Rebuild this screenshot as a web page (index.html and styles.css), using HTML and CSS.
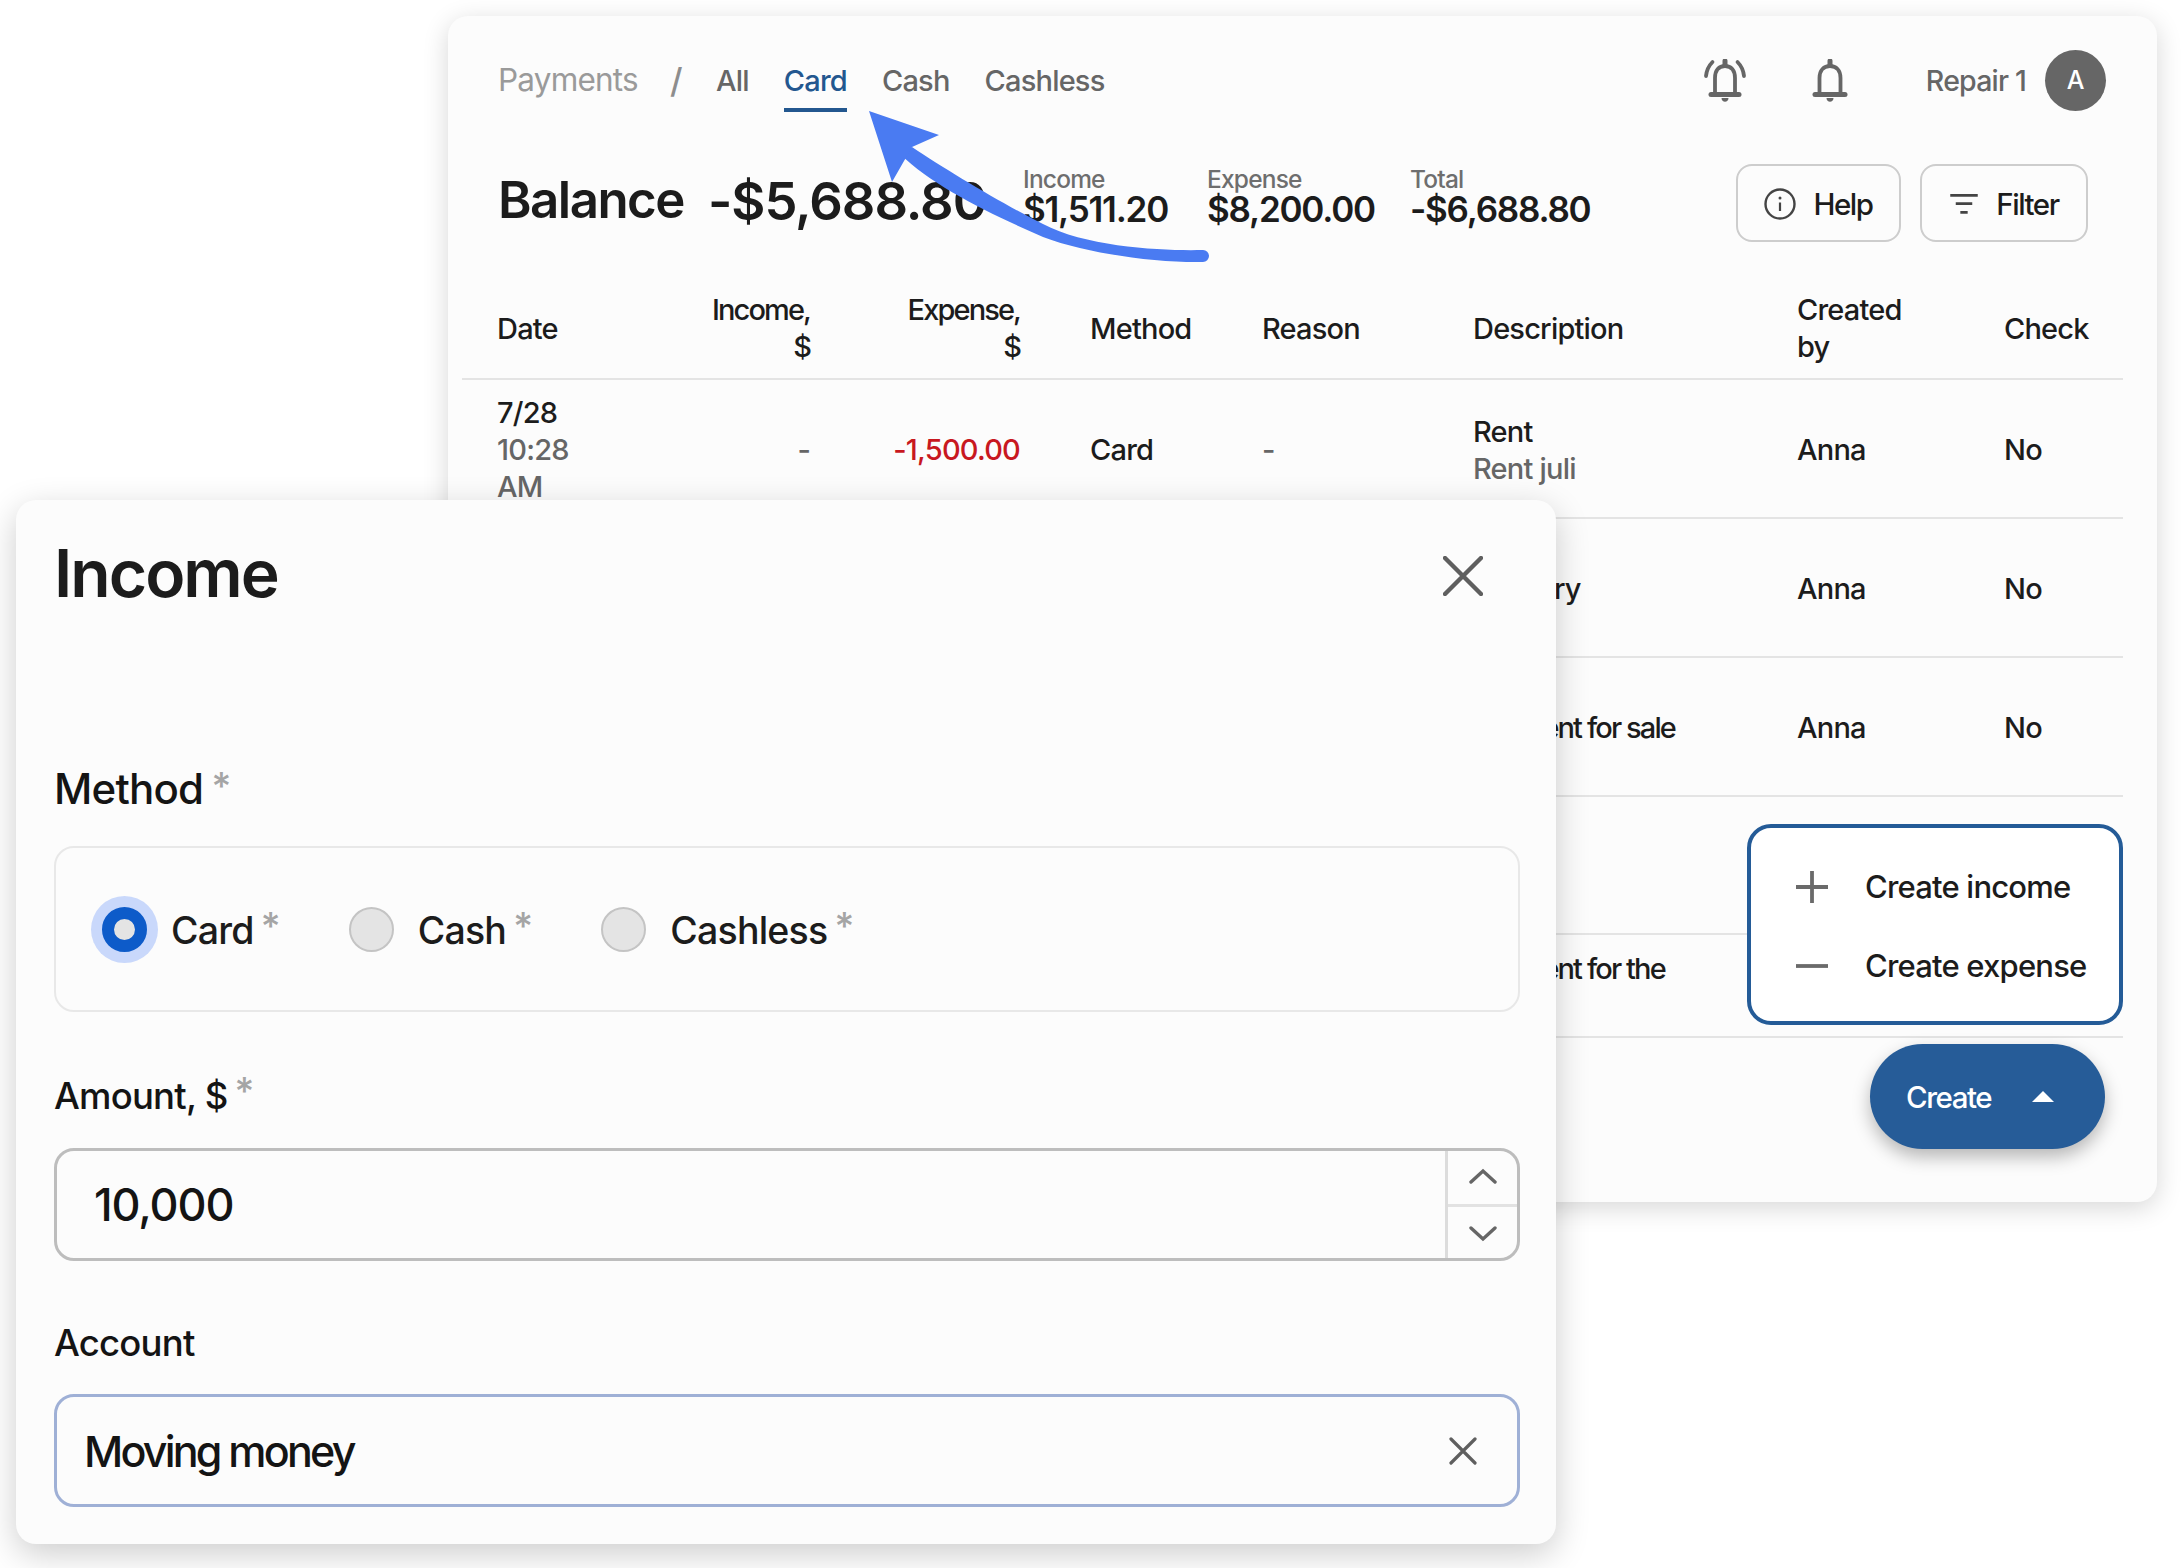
FILE: index.html
```html
<!DOCTYPE html>
<html lang="en">
<head>
<meta charset="utf-8">
<title>Payments</title>
<link rel="stylesheet" href="styles.css">
</head>
<body>
<div class="canvas">
  <section class="window back">
    <header class="topbar">
      <nav class="crumbs">
        <span class="crumb-root">Payments</span>
        <span class="crumb-sep">/</span>
        <a class="tab">All</a>
        <a class="tab active">Card</a>
        <a class="tab">Cash</a>
        <a class="tab">Cashless</a>
      </nav>
      <div class="account-area">
        <svg class="bell-ring" viewBox="0 0 44 44" fill="none" stroke="#666" stroke-linecap="round">
          <path d="M12 33V19C12 11 16 7 22 7S32 11 32 19V33" stroke-width="3.8"/>
          <path d="M8 35.500H36" stroke-width="5"/>
          <path d="M22 2V6" stroke-width="5"/>
          <path d="M9.500 3C5.500 7 3.500 12 3 17M34.500 3C38.500 7 40.500 12 41 17" stroke-width="3.800"/>
          <path d="M18.500 39H25.500C25.500 44 18.500 44 18.500 39Z" fill="#666" stroke="none"/>
        </svg>
        <svg class="bell" viewBox="0 0 36 44" fill="none" stroke="#666" stroke-linecap="round">
          <path d="M7.500 33V19C7.500 11 12 7 18 7S28.500 11 28.500 19V33" stroke-width="3.800"/>
          <path d="M3 35.500H33" stroke-width="5"/>
          <path d="M18 2V6" stroke-width="5"/>
          <path d="M14.500 39H21.500C21.500 44 14.500 44 14.500 39Z" fill="#666" stroke="none"/>
        </svg>
        <span class="account-name">Repair 1</span>
        <span class="avatar">A</span>
      </div>
    </header>

    <div class="summary">
      <h2 class="balance"><span>Balance</span><span class="balance-value">-$5,688.80</span></h2>
      <dl class="stat stat-income"><dt>Income</dt><dd>$1,511.20</dd></dl>
      <dl class="stat stat-expense"><dt>Expense</dt><dd>$8,200.00</dd></dl>
      <dl class="stat stat-total"><dt>Total</dt><dd>-$6,688.80</dd></dl>
      <div class="actions">
        <button class="btn btn-help">
          <svg class="btn-icon" viewBox="0 0 32 32" fill="none" stroke="#444">
            <circle cx="16" cy="16" r="14.500" stroke-width="2.400"/>
            <path d="M16 14.500V23" stroke-width="2.200"/>
            <circle cx="16" cy="10" r="1.500" fill="#444" stroke="none"/>
          </svg>
          Help
        </button>
        <button class="btn btn-filter">
          <svg class="btn-icon" viewBox="0 0 32 24" fill="none" stroke="#444" stroke-width="3">
            <path d="M1 2.500H31M7 11.500H25M12 21H20"/>
          </svg>
          Filter
        </button>
      </div>
    </div>

    <div class="table">
      <div class="row head">
        <div>Date</div>
        <div class="num">Income,<br>$</div>
        <div class="num">Expense,<br>$</div>
        <div>Method</div>
        <div>Reason</div>
        <div>Description</div>
        <div>Created<br>by</div>
        <div>Check</div>
      </div>
      <div class="row">
        <div>7/28<br><span class="muted">10:28<br>AM</span></div>
        <div class="num muted">-</div>
        <div class="num neg">-1,500.00</div>
        <div>Card</div>
        <div class="muted">-</div>
        <div>Rent<br><span class="muted">Rent juli</span></div>
        <div>Anna</div>
        <div>No</div>
      </div>
      <div class="row">
        <div>7/27<br><span class="muted">09:14<br>AM</span></div>
        <div class="num muted">-</div>
        <div class="num neg">-900.00</div>
        <div>Card</div>
        <div class="muted">-</div>
        <div>Delivery</div>
        <div>Anna</div>
        <div>No</div>
      </div>
      <div class="row">
        <div>7/26<br><span class="muted">03:40<br>PM</span></div>
        <div class="num">511.20</div>
        <div class="num muted">-</div>
        <div>Card</div>
        <div class="muted">-</div>
        <div class="tight">Payment for sale</div>
        <div>Anna</div>
        <div>No</div>
      </div>
      <div class="row row-plain">
        <div>7/25</div>
        <div class="num muted">-</div>
        <div class="num neg">-300.00</div>
        <div>Card</div>
        <div class="muted">-</div>
        <div>Rent</div>
        <div>Anna</div>
        <div>No</div>
      </div>
      <div class="row row-short">
        <div>7/24</div>
        <div class="num">1,000.00</div>
        <div class="num muted">-</div>
        <div>Card</div>
        <div class="muted">-</div>
        <div class="tight">Payment for the<br>rent</div>
        <div>Anna</div>
        <div>No</div>
      </div>
    </div>

    <div class="menu">
      <div class="menu-item">
        <svg class="menu-icon" viewBox="0 0 32 32" stroke="#6a6a6a" stroke-width="3.800"><path d="M0 16H32M16 0V32"/></svg>
        Create income
      </div>
      <div class="menu-item">
        <svg class="menu-icon" viewBox="0 0 32 32" stroke="#6a6a6a" stroke-width="3.800"><path d="M0 16H32"/></svg>
        Create expense
      </div>
    </div>
    <button class="fab">Create<span class="fab-caret"></span></button>
  </section>

  <svg class="arrow" viewBox="0 0 400 200">
    <path d="M355 154C320 155 240 152 195 128C155 108 100 75 64 51L52 58C85 90 140 117 195 141C240 158 310 167 355 166A6 6 0 0 0 355 154Z" fill="#4a7bf2"/>
    <path d="M21 15L91 39L64 51L44 86Z" fill="#4a7bf2"/>
  </svg>

  <section class="window modal">
    <div class="modal-head">
      <h1 class="modal-title">Income</h1>
      <svg class="modal-close" viewBox="0 0 40 40" stroke="#5f5f5f" stroke-width="4.400" stroke-linecap="round"><path d="M2 2L38 38M38 2L2 38"/></svg>
    </div>

    <label class="field-label label-method">Method <i class="req">*</i></label>
    <div class="radio-box">
      <span class="radio-item"><span class="radio on"></span><span class="radio-text">Card <i class="req">*</i></span></span>
      <span class="radio-item"><span class="radio"></span><span class="radio-text">Cash <i class="req">*</i></span></span>
      <span class="radio-item"><span class="radio"></span><span class="radio-text">Cashless <i class="req">*</i></span></span>
    </div>

    <label class="field-label label-amount">Amount, $ <i class="req">*</i></label>
    <div class="input input-number">
      <span class="input-value">10,000</span>
      <div class="stepper">
        <span class="step step-up">
          <svg class="chevron" viewBox="0 0 28 16" fill="none" stroke="#666" stroke-width="3.400" stroke-linecap="round"><path d="M2 14L14 3L26 14"/></svg>
        </span>
        <span class="step step-down">
          <svg class="chevron" viewBox="0 0 28 16" fill="none" stroke="#666" stroke-width="3.400" stroke-linecap="round"><path d="M2 2L14 13L26 2"/></svg>
        </span>
      </div>
    </div>

    <label class="field-label label-account">Account</label>
    <div class="input input-select">
      <span class="input-value">Moving money</span>
      <svg class="clear" viewBox="0 0 28 28" stroke="#5f5f5f" stroke-width="3.200" stroke-linecap="round"><path d="M2 2L26 26M26 2L2 26"/></svg>
    </div>
  </section>
</div>
</body>
</html>
```

FILE: styles.css
```css
* { box-sizing: border-box; }
html, body { margin: 0; padding: 0; background: #fff; }
body {
  font-family: Inter, "Liberation Sans", sans-serif;
  font-weight: 450;
  color: #1c1c1c;
  letter-spacing: -0.05em;
}
.canvas { position: relative; width: 2182px; height: 1568px; overflow: hidden; }

.window {
  position: absolute;
  background: #fcfcfc;
  border-radius: 20px;
  box-shadow: 0 6px 26px rgba(0, 0, 0, 0.16);
}

/* Back window */
.back { left: 448px; top: 16px; width: 1709px; height: 1186px; padding-top: 33px; }

.topbar { display: flex; align-items: center; justify-content: space-between; height: 62px; padding: 0 51px 0 50px; }
.crumbs { display: flex; align-items: center; font-size: 29px; color: #666; }
.crumb-root { color: #9a9a9a; width: 138px; font-size: 31.500px; position: relative; top: -1px; font-weight: 400; }
.crumb-sep { color: #8d8d8d; margin-left: 34px; margin-right: 38px; width: 8px; font-size: 34px; }
.tab { margin-right: 35px; position: relative; }
.tab.active { color: #23578f; }
.tab.active::after {
  content: "";
  position: absolute;
  left: 0; right: 0; bottom: -14px;
  height: 4px;
  background: #23578f;
}

.account-area { display: flex; align-items: center; }
.bell-ring { width: 44px; height: 44px; margin-right: 65px; position: relative; top: 1px; }
.bell { width: 36px; height: 44px; margin-right: 78px; position: relative; top: 1px; }
.account-name { font-size: 28.500px; color: #666; margin-right: 19px; }
.avatar {
  width: 61px; height: 61px; border-radius: 50%;
  background: #666; color: #fff;
  display: flex; align-items: center; justify-content: center;
  font-size: 25px; letter-spacing: 0;
}

.summary { display: flex; align-items: center; height: 78px; margin-top: 53px; padding: 0 69px 0 50px; }
.balance { margin: 0 0 4px; font-size: 51px; font-weight: 600; display: flex; gap: 24px; width: 525px; letter-spacing: -0.03em; }
.balance-value { font-size: 52.500px; letter-spacing: -0.02em; }
.stat { margin: 0 0 16px; display: flex; flex-direction: column; }
.stat dt { font-size: 24.500px; color: #6e6e6e; line-height: 28px; }
.stat dd { margin: 0; font-size: 35px; font-weight: 600; line-height: 32px; letter-spacing: -0.035em; }
.stat-income { width: 184px; }
.stat-expense { width: 203px; }
.actions { display: flex; gap: 19px; margin-left: auto; }
.btn {
  display: flex; align-items: center; justify-content: center;
  height: 78px; border: 2px solid #cdcdcd; border-radius: 16px;
  background: transparent; color: #1c1c1c;
  font: inherit; font-size: 29.500px; letter-spacing: -0.05em;
  padding-top: 2px;
}
.btn-help { width: 165px; gap: 17px; }
.btn-filter { width: 168px; gap: 17px; }
.btn-help .btn-icon { width: 32px; height: 32px; }
.btn-filter .btn-icon { width: 30px; height: 22px; }

.table { margin: 49px 34px 0 14px; font-size: 29px; line-height: 37px; color: #1c1c1c; }
.row {
  display: grid;
  grid-template-columns: 173px 210px 210px 172px 211px 324px 207px 154px;
  align-items: center;
  height: 139px;
  padding-top: 2px;
  border-bottom: 2px solid #e4e4e4;
}
.row > div { padding: 0 35px; }
.row.head { height: 89px; padding: 0 0 14px; }
.row.head .num { letter-spacing: -0.065em; }
.row.row-plain { height: 138px; }
.row.row-short { height: 103px; align-items: start; padding-top: 15px; }
.num { text-align: right; }
.muted { color: #666; }
.neg { color: #c8181f; }
.tight { letter-spacing: -0.065em; white-space: nowrap; }

.menu {
  position: absolute;
  left: 1299px; top: 808px;
  width: 376px; height: 201px;
  background: #fff;
  border: 4px solid #245b97;
  border-radius: 24px;
  padding: 19px 0 0 45px;
  font-size: 31px;
}
.menu-item { display: flex; align-items: center; height: 79px; gap: 37px; }
.menu-icon { width: 32px; height: 32px; flex: none; }

.fab {
  position: absolute;
  left: 1422px; top: 1028px;
  width: 235px; height: 105px;
  border: 0; border-radius: 53px;
  background: #265c98; color: #fff;
  font: inherit; font-size: 29.500px; letter-spacing: -0.05em;
  display: flex; align-items: center; padding-left: 36px;
  box-shadow: 0 8px 18px rgba(0, 0, 0, 0.28);
}
.fab-caret {
  margin-left: 41px;
  width: 0; height: 0;
  border-left: 11px solid transparent;
  border-right: 11px solid transparent;
  border-bottom: 11px solid #fff;
}

/* Annotation arrow */
.arrow { position: absolute; left: 848px; top: 96px; width: 400px; height: 200px; }

/* Modal */
.modal { left: 16px; top: 500px; width: 1540px; height: 1044px; padding: 0 36px 0 38px; box-shadow: 0 10px 34px rgba(0, 0, 0, 0.2); }
.modal-head { display: flex; justify-content: space-between; align-items: center; height: 104px; padding-right: 37px; }
.modal-title { margin: 0; font-size: 66px; font-weight: 600; line-height: 104px; position: relative; top: 21px; letter-spacing: -0.03em; }
.modal-close { width: 40px; height: 40px; position: relative; top: 24px; }

.field-label { display: block; font-size: 42px; line-height: 50px; color: #141414; }
.label-method { margin-top: 160px; }
.label-amount { margin-top: 59px; font-size: 36.500px; }
.label-account { margin-top: 57px; font-size: 36.500px; }
.req { font-style: normal; color: #a5a5a5; font-size: 38px; line-height: 0; position: relative; top: -4px; margin-left: -2px; font-weight: 500; }

.radio-box {
  display: flex; align-items: center;
  height: 166px; margin-top: 32px;
  padding-left: 46px;
  border: 2px solid #e8e8e8; border-radius: 20px;
  font-size: 37.500px;
}
.radio-item { display: flex; align-items: center; gap: 24px; margin-right: 69px; }
.radio-text { padding-top: 3px; }
.radio {
  width: 45px; height: 45px; border-radius: 50%;
  background: #e4e4e4; border: 2px solid #c4c4c4;
  flex: none;
}
.radio.on { border: 12px solid #0d5bc9; box-shadow: 0 0 0 11px #c9d8fb; }

.input {
  display: flex; align-items: center; justify-content: space-between;
  height: 113px; margin-top: 27px;
  border: 3px solid #bdbdbd; border-radius: 20px;
  overflow: hidden;
}
.input-value { color: #141414; }
.input-number .input-value { padding-left: 37px; font-size: 45px; letter-spacing: -0.025em; }
.input-select { border-color: #9fb0d6; margin-top: 26px; }
.input-select .input-value { padding-left: 27px; font-size: 43px; letter-spacing: -0.065em; }
.clear { width: 28px; height: 28px; margin-right: 40px; }

.stepper { display: flex; flex-direction: column; width: 72px; height: 100%; border-left: 3px solid #dcdcdc; }
.step { flex: 1; display: flex; align-items: center; justify-content: center; }
.step-up { padding-bottom: 4px; }
.step-down { padding-top: 2px; border-top: 3px solid #e2e2e2; }
.chevron { width: 28px; height: 16px; }
```
